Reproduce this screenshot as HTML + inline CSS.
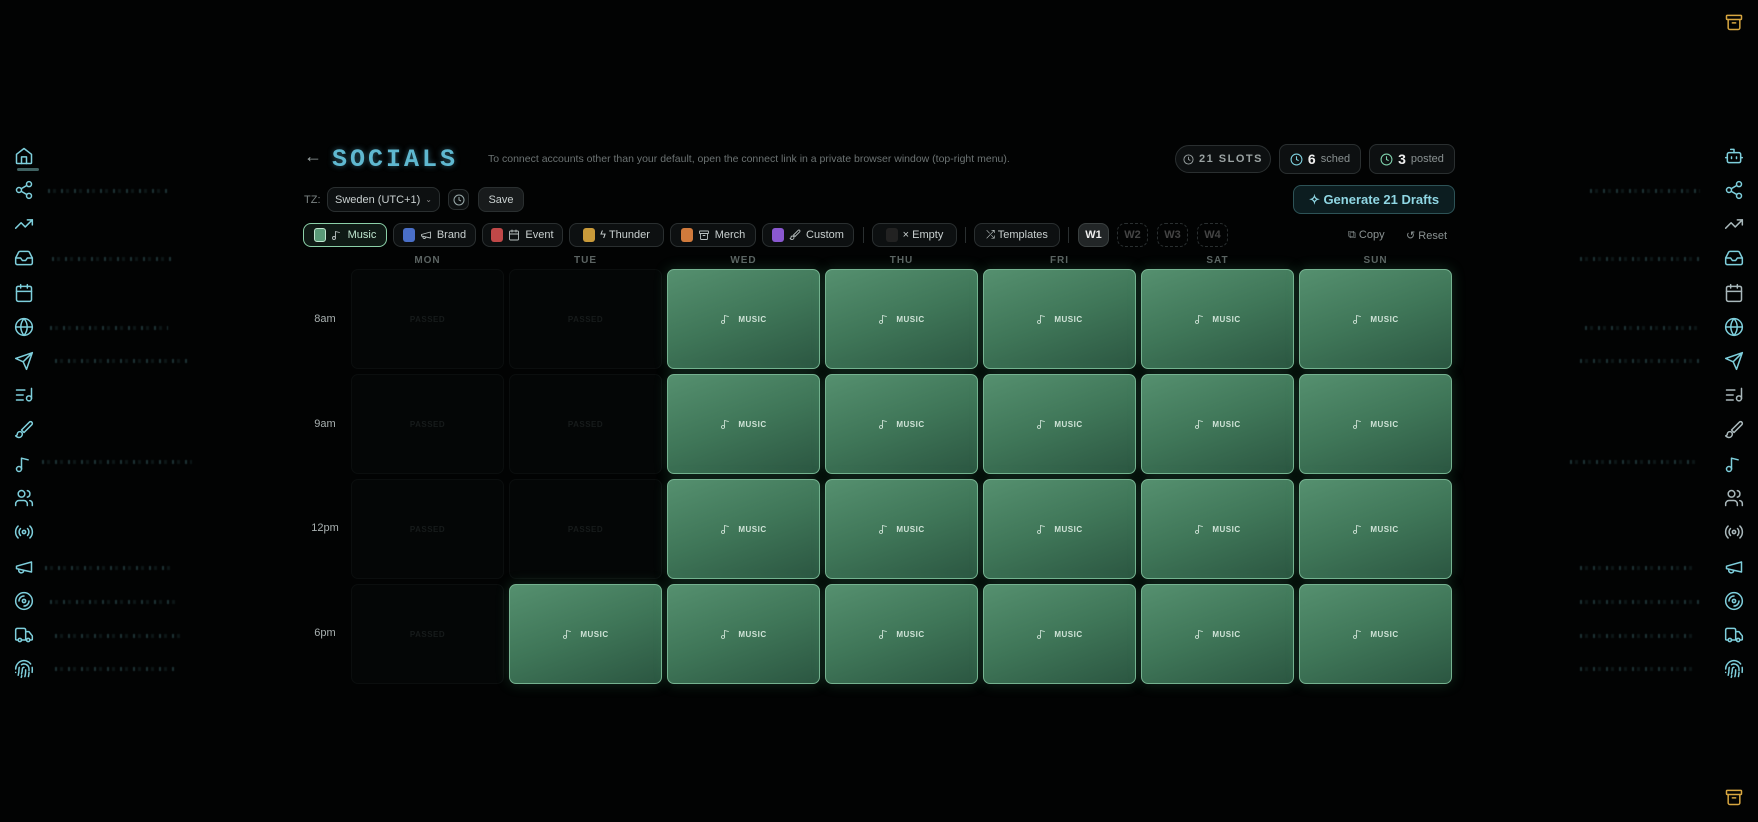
<!DOCTYPE html>
<html><head><meta charset="utf-8">
<style>
*{box-sizing:border-box;margin:0;padding:0}
body{width:1758px;height:822px;background:#020303;font-family:"Liberation Sans",sans-serif;position:relative;overflow:hidden;color:#cfd6d4}
.a{position:absolute}
.ic{position:absolute;width:20px;height:20px;fill:none;stroke:#7ecfdc;stroke-width:1.8;stroke-linecap:round;stroke-linejoin:round}
.dim{stroke:#a9b8bb}
.streak{position:absolute;height:4px;background:repeating-linear-gradient(90deg,rgba(120,200,210,.25) 0 2px,transparent 2px 5px,rgba(120,200,210,.1) 5px 8px,transparent 8px 13px);filter:blur(.6px)}
.pill{position:absolute;border:1px solid #2a2f30;background:#0d1011;border-radius:8px;font-size:11px;color:#c9d0d0;display:flex;align-items:center;justify-content:center;gap:5px}
.sw{width:12px;height:14px;border-radius:3px;display:inline-block}
.chip svg{width:12px;height:12px;fill:none;stroke:#b8c0c0;stroke-width:1.8;stroke-linecap:round;stroke-linejoin:round}
.day{position:absolute;top:255px;width:153px;text-align:center;font-size:10px;font-weight:bold;letter-spacing:1px;color:#5c6463}
.tm{position:absolute;left:300px;width:50px;text-align:center;font-size:11px;color:#a8b0b0}
.cell{position:absolute;width:153px;height:100px;border-radius:7px}
.p{border:1px solid #0b0e0e;background:#040606;display:flex;align-items:center;justify-content:center;font-size:8px;font-weight:bold;color:#171b1b;letter-spacing:.5px}
.g{border:1px solid #75b290;background:linear-gradient(160deg,#55906f 0%,#3f7658 50%,#2b5641 100%);box-shadow:0 0 14px rgba(80,190,130,.22);display:flex;align-items:center;justify-content:center;gap:6px;font-size:8px;font-weight:bold;color:#cfe3d7;letter-spacing:.5px}
.g svg{width:12px;height:14px;fill:none;stroke:#d6e8dd;stroke-width:1.6;stroke-linecap:round}
</style></head><body>
<svg width="0" height="0" style="position:absolute">
<defs>
<symbol id="home" viewBox="0 0 24 24"><path d="M3 10l9-7 9 7v10a1 1 0 0 1-1 1H4a1 1 0 0 1-1-1z"/><path d="M9 21v-8h6v8"/></symbol>
<symbol id="share" viewBox="0 0 24 24"><circle cx="18" cy="5" r="3"/><circle cx="6" cy="12" r="3"/><circle cx="18" cy="19" r="3"/><path d="M8.6 13.5l6.8 4M15.4 6.5l-6.8 4"/></symbol>
<symbol id="trend" viewBox="0 0 24 24"><path d="M22 7l-8.5 8.5-5-5L2 17"/><path d="M16 7h6v6"/></symbol>
<symbol id="inbox" viewBox="0 0 24 24"><path d="M22 12h-6l-2 3h-4l-2-3H2"/><path d="M5.5 5.1L2 12v6a2 2 0 0 0 2 2h16a2 2 0 0 0 2-2v-6l-3.5-6.9A2 2 0 0 0 16.8 4H7.2a2 2 0 0 0-1.7 1.1z"/></symbol>
<symbol id="cal" viewBox="0 0 24 24"><rect x="3" y="4" width="18" height="18" rx="2"/><path d="M16 2v4M8 2v4M3 10h18"/></symbol>
<symbol id="globe" viewBox="0 0 24 24"><circle cx="12" cy="12" r="10"/><path d="M2 12h20M12 2a15 15 0 0 1 0 20a15 15 0 0 1 0-20"/></symbol>
<symbol id="send" viewBox="0 0 24 24"><path d="M22 2L11 13M22 2l-7 20-4-9-9-4z"/></symbol>
<symbol id="list" viewBox="0 0 24 24"><path d="M3 6h10M3 12h8M3 18h8M21 4v12"/><circle cx="18" cy="16" r="3"/></symbol>
<symbol id="brush" viewBox="0 0 24 24"><path d="M18.4 2.6a2 2 0 0 1 3 3L12 15l-3-3z"/><path d="M7 14c-1.7 0-3 1.3-3 3 0 1.3-2 2-2 2 1 1 2.5 2 4 2 2.2 0 4-1.8 4-4 0-1.7-1.3-3-3-3z"/></symbol>
<symbol id="note" viewBox="0 0 24 24"><path d="M9 18V5l8 2"/><circle cx="6" cy="18" r="3"/></symbol>
<symbol id="users" viewBox="0 0 24 24"><path d="M16 21v-2a4 4 0 0 0-4-4H6a4 4 0 0 0-4 4v2"/><circle cx="9" cy="7" r="4"/><path d="M22 21v-2a4 4 0 0 0-3-3.9M16 3.1a4 4 0 0 1 0 7.8"/></symbol>
<symbol id="radio" viewBox="0 0 24 24"><circle cx="12" cy="12" r="2"/><path d="M4.9 19.1a10 10 0 0 1 0-14.2M7.8 16.2a6 6 0 0 1 0-8.4M16.2 7.8a6 6 0 0 1 0 8.4M19.1 4.9a10 10 0 0 1 0 14.2"/></symbol>
<symbol id="mega" viewBox="0 0 24 24"><path d="M3 11l18-5v12L3 14z"/><path d="M11.6 16.8a3 3 0 1 1-5.8-1.6"/></symbol>
<symbol id="disc" viewBox="0 0 24 24"><circle cx="12" cy="12" r="10"/><circle cx="12" cy="12" r="2"/><path d="M6 12a6 6 0 0 1 6-6M18 12a6 6 0 0 1-6 6"/></symbol>
<symbol id="truck" viewBox="0 0 24 24"><path d="M14 18V6a2 2 0 0 0-2-2H4a2 2 0 0 0-2 2v11a1 1 0 0 0 1 1h2M15 18H9M19 18h2a1 1 0 0 0 1-1v-3.6a1 1 0 0 0-.2-.6l-3.5-4.4A1 1 0 0 0 17.5 8H14"/><circle cx="17" cy="18" r="2"/><circle cx="7" cy="18" r="2"/></symbol>
<symbol id="finger" viewBox="0 0 24 24"><path d="M12 10a2 2 0 0 0-2 2c0 1 0 3-1 6M14 13.1c0 2.5 0 5-1 8M17.3 21c.3-1.5.7-3 .7-5M2 12a10 10 0 0 1 18-6M2 16h.01M21.8 16c.2-2 .1-5.3 0-6M5 19.5C5.5 18 6 15 6 12a6 6 0 0 1 .3-2M8.7 22c.2-.7.4-1.3.6-2M9 6.8a6 6 0 0 1 9 5.2v2"/></symbol>
<symbol id="bot" viewBox="0 0 24 24"><path d="M12 8V4H8"/><rect x="4" y="8" width="16" height="12" rx="2"/><path d="M2 14h2M20 14h2M15 13v2M9 13v2"/></symbol>
<symbol id="box" viewBox="0 0 24 24"><rect x="3" y="4" width="18" height="5" rx="1"/><path d="M5 9v10a2 2 0 0 0 2 2h10a2 2 0 0 0 2-2V9M10 13h4"/></symbol>
<symbol id="clock" viewBox="0 0 24 24"><circle cx="12" cy="12" r="10"/><path d="M12 6v6l4 2"/></symbol>
</defs></svg>

<!-- streaks -->
<div class="streak" style="left:48px;top:189px;width:120px"></div>
<div class="streak" style="left:52px;top:257px;width:120px"></div>
<div class="streak" style="left:50px;top:326px;width:118px"></div>
<div class="streak" style="left:55px;top:359px;width:135px"></div>
<div class="streak" style="left:42px;top:460px;width:150px"></div>
<div class="streak" style="left:45px;top:566px;width:130px"></div>
<div class="streak" style="left:50px;top:600px;width:130px"></div>
<div class="streak" style="left:55px;top:634px;width:125px"></div>
<div class="streak" style="left:55px;top:667px;width:120px"></div>
<div class="streak" style="left:1590px;top:189px;width:110px"></div>
<div class="streak" style="left:1580px;top:257px;width:120px"></div>
<div class="streak" style="left:1585px;top:326px;width:115px"></div>
<div class="streak" style="left:1580px;top:359px;width:120px"></div>
<div class="streak" style="left:1570px;top:460px;width:130px"></div>
<div class="streak" style="left:1580px;top:566px;width:115px"></div>
<div class="streak" style="left:1580px;top:600px;width:120px"></div>
<div class="streak" style="left:1580px;top:634px;width:115px"></div>
<div class="streak" style="left:1580px;top:667px;width:115px"></div>

<!-- left sidebar -->
<svg class="ic" style="left:14px;top:146px"><use href="#home"/></svg>
<div class="a" style="left:17px;top:168px;width:22px;height:3px;border-radius:3px;background:#5a8c8c;opacity:.7"></div>
<svg class="ic" style="left:14px;top:180px"><use href="#share"/></svg>
<svg class="ic" style="left:14px;top:214px"><use href="#trend"/></svg>
<svg class="ic" style="left:14px;top:248px"><use href="#inbox"/></svg>
<svg class="ic" style="left:14px;top:283px"><use href="#cal"/></svg>
<svg class="ic" style="left:14px;top:317px"><use href="#globe"/></svg>
<svg class="ic" style="left:14px;top:351px"><use href="#send"/></svg>
<svg class="ic" style="left:14px;top:385px"><use href="#list"/></svg>
<svg class="ic" style="left:14px;top:420px"><use href="#brush"/></svg>
<svg class="ic" style="left:14px;top:454px"><use href="#note"/></svg>
<svg class="ic" style="left:14px;top:488px"><use href="#users"/></svg>
<svg class="ic" style="left:14px;top:522px"><use href="#radio"/></svg>
<svg class="ic" style="left:14px;top:557px"><use href="#mega"/></svg>
<svg class="ic" style="left:14px;top:591px"><use href="#disc"/></svg>
<svg class="ic" style="left:14px;top:625px"><use href="#truck"/></svg>
<svg class="ic" style="left:14px;top:659px"><use href="#finger"/></svg>

<!-- right sidebar -->
<svg class="ic" style="left:1724px;top:12px;stroke:#d7a640"><use href="#box"/></svg>
<svg class="ic" style="left:1724px;top:146px"><use href="#bot"/></svg>
<svg class="ic" style="left:1724px;top:180px"><use href="#share"/></svg>
<svg class="ic dim" style="left:1724px;top:214px"><use href="#trend"/></svg>
<svg class="ic" style="left:1724px;top:248px"><use href="#inbox"/></svg>
<svg class="ic dim" style="left:1724px;top:283px"><use href="#cal"/></svg>
<svg class="ic" style="left:1724px;top:317px"><use href="#globe"/></svg>
<svg class="ic" style="left:1724px;top:351px"><use href="#send"/></svg>
<svg class="ic dim" style="left:1724px;top:385px"><use href="#list"/></svg>
<svg class="ic dim" style="left:1724px;top:420px"><use href="#brush"/></svg>
<svg class="ic" style="left:1724px;top:454px"><use href="#note"/></svg>
<svg class="ic dim" style="left:1724px;top:488px"><use href="#users"/></svg>
<svg class="ic dim" style="left:1724px;top:522px"><use href="#radio"/></svg>
<svg class="ic" style="left:1724px;top:557px"><use href="#mega"/></svg>
<svg class="ic" style="left:1724px;top:591px"><use href="#disc"/></svg>
<svg class="ic" style="left:1724px;top:625px"><use href="#truck"/></svg>
<svg class="ic" style="left:1724px;top:659px"><use href="#finger"/></svg>
<svg class="ic" style="left:1724px;top:787px;stroke:#d7a640"><use href="#box"/></svg>

<!-- header -->
<div class="a" style="left:304px;top:146px;font-size:18px;color:#9aa3a3">←</div>
<div class="a" style="left:332px;top:145px;font-family:'Liberation Mono',monospace;font-size:25px;font-weight:bold;letter-spacing:3px;color:#5fb8d0;text-shadow:0 0 6px rgba(90,180,210,.5)">SOCIALS</div>
<div class="a" style="left:488px;top:153px;font-size:10.5px;color:#6c7373">To connect accounts other than your default, open the connect link in a private browser window (top-right menu).</div>

<div class="pill" style="left:1175px;top:145px;width:96px;height:28px;border-radius:14px;font-size:11px;letter-spacing:1.5px;color:#9ba3a3;font-weight:bold"><svg width="11" height="11" style="fill:none;stroke:#9ba3a3;stroke-width:2"><use href="#clock"/></svg>21 SLOTS</div>
<div class="pill" style="left:1279px;top:144px;width:82px;height:30px"><svg width="13" height="13" style="fill:none;stroke:#7ecfdc;stroke-width:2"><use href="#clock"/></svg><b style="font-size:14px;color:#eee">6</b><span style="color:#8a9292">sched</span></div>
<div class="pill" style="left:1369px;top:144px;width:86px;height:30px"><svg width="13" height="13" style="fill:none;stroke:#7ecfaa;stroke-width:2"><use href="#clock"/></svg><b style="font-size:14px;color:#eee">3</b><span style="color:#8a9292">posted</span></div>
<div class="pill" style="left:1293px;top:185px;width:162px;height:29px;background:#0c1d20;border-color:#2d5357;color:#8fd6e3;font-size:13px;font-weight:bold">✧ Generate 21 Drafts</div>

<div class="a" style="left:304px;top:194px;font-size:11px;color:#7b8383">TZ:</div>
<div class="pill" style="left:327px;top:187px;width:113px;height:25px;font-size:11px">Sweden (UTC+1) <span style="font-size:8px;color:#888">⌄</span></div>
<div class="pill" style="left:448px;top:189px;width:21px;height:21px;border-radius:7px"><svg width="12" height="12" style="fill:none;stroke:#9aa;stroke-width:2"><use href="#clock"/></svg></div>
<div class="pill" style="left:478px;top:187px;width:46px;height:25px;font-size:11px;background:#181b1c">Save</div>

<!-- chips -->
<div class="pill chip" style="left:303px;top:223px;width:84px;height:24px;border-color:#8bd0a8;background:#0f1a15;color:#bfe6cf"><span class="sw" style="background:#5a9a78;border:1px solid #bfe6cf"></span><svg><use href="#note"/></svg>Music</div>
<div class="pill chip" style="left:393px;top:223px;width:83px;height:24px"><span class="sw" style="background:#4a6fc8"></span><svg><use href="#mega"/></svg>Brand</div>
<div class="pill chip" style="left:482px;top:223px;width:81px;height:24px"><span class="sw" style="background:#c04848"></span><svg><use href="#cal"/></svg>Event</div>
<div class="pill chip" style="left:569px;top:223px;width:95px;height:24px"><span class="sw" style="background:#c99a3a"></span>ϟ Thunder</div>
<div class="pill chip" style="left:670px;top:223px;width:86px;height:24px"><span class="sw" style="background:#d07a3c"></span><svg><use href="#box"/></svg>Merch</div>
<div class="pill chip" style="left:762px;top:223px;width:92px;height:24px"><span class="sw" style="background:#8a58d0"></span><svg><use href="#brush"/></svg>Custom</div>
<div class="a" style="left:863px;top:227px;width:1px;height:16px;background:#2a2f30"></div>
<div class="pill chip" style="left:872px;top:223px;width:85px;height:24px"><span class="sw" style="background:#222"></span>× Empty</div>
<div class="a" style="left:965px;top:227px;width:1px;height:16px;background:#2a2f30"></div>
<div class="pill chip" style="left:974px;top:223px;width:86px;height:24px">⤮ Templates</div>
<div class="a" style="left:1068px;top:227px;width:1px;height:16px;background:#2a2f30"></div>
<div class="pill" style="left:1078px;top:223px;width:31px;height:24px;background:#222627;border-color:#3a4040;font-weight:bold;color:#eee;font-size:11px">W1</div>
<div class="pill" style="left:1117px;top:223px;width:31px;height:24px;border-style:dashed;background:none;color:#444;font-size:11px;font-weight:bold">W2</div>
<div class="pill" style="left:1157px;top:223px;width:31px;height:24px;border-style:dashed;background:none;color:#444;font-size:11px;font-weight:bold">W3</div>
<div class="pill" style="left:1197px;top:223px;width:31px;height:24px;border-style:dashed;background:none;color:#444;font-size:11px;font-weight:bold">W4</div>
<div class="a" style="left:1348px;top:229px;font-size:11px;color:#8a9292">⧉ Copy</div>
<div class="a" style="left:1406px;top:229px;font-size:11px;color:#8a9292">↺ Reset</div>

<!-- day headers -->
<div class="day" style="left:351px">MON</div><div class="day" style="left:509px">TUE</div><div class="day" style="left:667px">WED</div><div class="day" style="left:825px">THU</div><div class="day" style="left:983px">FRI</div><div class="day" style="left:1141px">SAT</div><div class="day" style="left:1299px">SUN</div>
<div class="tm" style="top:313px">8am</div><div class="tm" style="top:418px">9am</div><div class="tm" style="top:522px">12pm</div><div class="tm" style="top:627px">6pm</div>

<!-- row 1 -->
<div class="cell p" style="left:351px;top:269px">PASSED</div>
<div class="cell p" style="left:509px;top:269px">PASSED</div>
<div class="cell g" style="left:667px;top:269px"><svg><use href="#note"/></svg>MUSIC</div>
<div class="cell g" style="left:825px;top:269px"><svg><use href="#note"/></svg>MUSIC</div>
<div class="cell g" style="left:983px;top:269px"><svg><use href="#note"/></svg>MUSIC</div>
<div class="cell g" style="left:1141px;top:269px"><svg><use href="#note"/></svg>MUSIC</div>
<div class="cell g" style="left:1299px;top:269px"><svg><use href="#note"/></svg>MUSIC</div>
<!-- row 2 -->
<div class="cell p" style="left:351px;top:374px">PASSED</div>
<div class="cell p" style="left:509px;top:374px">PASSED</div>
<div class="cell g" style="left:667px;top:374px"><svg><use href="#note"/></svg>MUSIC</div>
<div class="cell g" style="left:825px;top:374px"><svg><use href="#note"/></svg>MUSIC</div>
<div class="cell g" style="left:983px;top:374px"><svg><use href="#note"/></svg>MUSIC</div>
<div class="cell g" style="left:1141px;top:374px"><svg><use href="#note"/></svg>MUSIC</div>
<div class="cell g" style="left:1299px;top:374px"><svg><use href="#note"/></svg>MUSIC</div>
<!-- row 3 -->
<div class="cell p" style="left:351px;top:479px">PASSED</div>
<div class="cell p" style="left:509px;top:479px">PASSED</div>
<div class="cell g" style="left:667px;top:479px"><svg><use href="#note"/></svg>MUSIC</div>
<div class="cell g" style="left:825px;top:479px"><svg><use href="#note"/></svg>MUSIC</div>
<div class="cell g" style="left:983px;top:479px"><svg><use href="#note"/></svg>MUSIC</div>
<div class="cell g" style="left:1141px;top:479px"><svg><use href="#note"/></svg>MUSIC</div>
<div class="cell g" style="left:1299px;top:479px"><svg><use href="#note"/></svg>MUSIC</div>
<!-- row 4 -->
<div class="cell p" style="left:351px;top:584px">PASSED</div>
<div class="cell g" style="left:509px;top:584px"><svg><use href="#note"/></svg>MUSIC</div>
<div class="cell g" style="left:667px;top:584px"><svg><use href="#note"/></svg>MUSIC</div>
<div class="cell g" style="left:825px;top:584px"><svg><use href="#note"/></svg>MUSIC</div>
<div class="cell g" style="left:983px;top:584px"><svg><use href="#note"/></svg>MUSIC</div>
<div class="cell g" style="left:1141px;top:584px"><svg><use href="#note"/></svg>MUSIC</div>
<div class="cell g" style="left:1299px;top:584px"><svg><use href="#note"/></svg>MUSIC</div>
</body></html>
